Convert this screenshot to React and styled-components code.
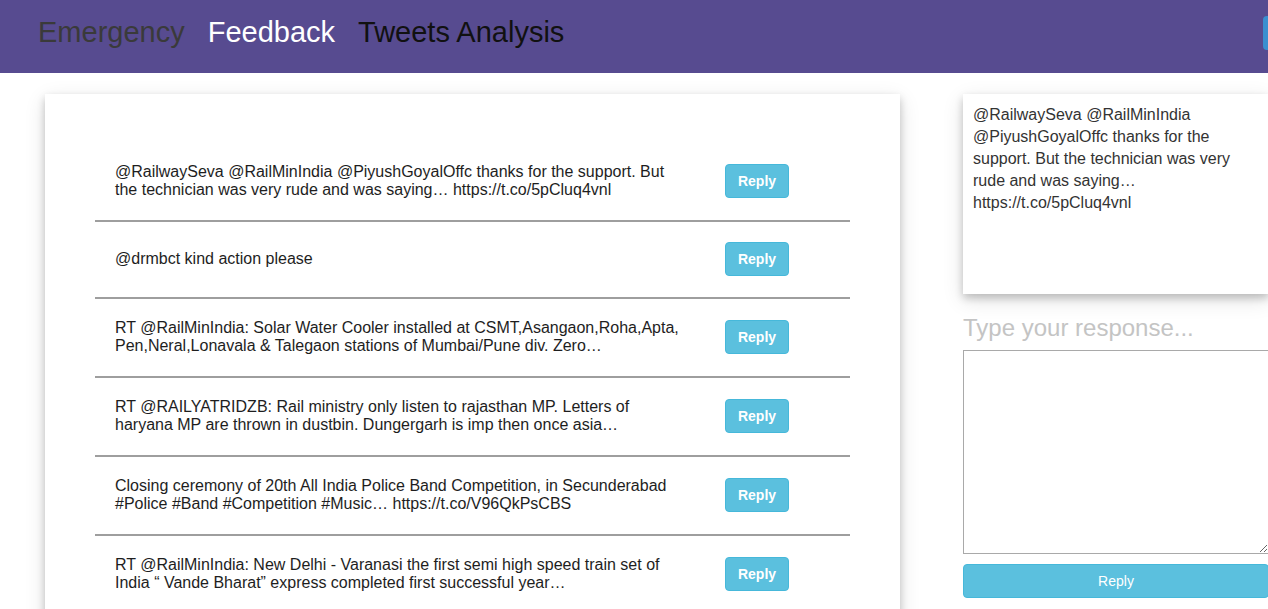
import styled, { createGlobalStyle } from "styled-components";

const GlobalStyle = createGlobalStyle`
  html, body {
    margin: 0;
    padding: 0;
    overflow-x: hidden;
    background: #fff;
    font-family: "Liberation Sans", Arial, sans-serif;
  }
  * {
    box-sizing: border-box;
  }
`;

const NavBar = styled.nav`
  display: flex;
  align-items: center;
  height: 73px;
  padding: 0 0 9px 38px;
  background: #574b90;
  gap: 23px;
`;

const NavLink = styled.a`
  font-size: 29px;
  line-height: 34px;
  color: ${(p) => p.color};
  text-decoration: none;
  white-space: nowrap;
`;

const NavButton = styled.button`
  margin-left: auto;
  margin-right: -75px;
  width: 80px;
  height: 34px;
  margin-top: 2px;
  border: none;
  border-radius: 4px;
  background: #3a8fd0;
  flex-shrink: 0;
`;

const Main = styled.main`
  display: flex;
  align-items: flex-start;
  gap: 63px;
  padding: 21px 0 0 45px;
`;

const ListCard = styled.section`
  width: 855px;
  flex-shrink: 0;
  padding: 49px 50px 0;
  min-height: 600px;
  background: #fff;
  box-shadow: 0 4px 8px 0 rgba(0, 0, 0, 0.2), 0 6px 20px 0 rgba(0, 0, 0, 0.12);
`;

const TweetRow = styled.div`
  display: flex;
  align-items: center;
  padding: 20px 61px 21px 20px;
  border-bottom: 2px solid #9e9e9e;
`;

const TweetText = styled.p`
  width: 570px;
  margin: 0;
  font-size: 16px;
  line-height: 18px;
  color: #1e1e1e;
`;

const SmallReply = styled.button`
  margin-left: auto;
  width: 64px;
  height: 34px;
  padding: 0;
  border: 1px solid #46b8da;
  border-radius: 4px;
  background: #5bc0de;
  color: #fff;
  font-family: "Liberation Sans", Arial, sans-serif;
  font-size: 14px;
  font-weight: bold;
`;

const Side = styled.aside`
  width: 306px;
  flex-shrink: 0;
  display: flex;
  flex-direction: column;
`;

const Selected = styled.div`
  height: 200px;
  padding: 10px 20px 10px 10px;
  background: #fff;
  font-size: 16px;
  line-height: 22px;
  color: #333;
  box-shadow: 0 4px 8px 0 rgba(0, 0, 0, 0.2), 0 6px 20px 0 rgba(0, 0, 0, 0.12);
`;

const Prompt = styled.h3`
  margin: 19px 0 8px;
  font-size: 24px;
  line-height: 29px;
  font-weight: normal;
  color: #c4c4c4;
`;

const Response = styled.textarea`
  display: block;
  width: 100%;
  height: 204px;
  margin: 0 0 10px;
  border: 1px solid #a9a9a9;
  resize: both;
  font-family: "Liberation Sans", Arial, sans-serif;
`;

const WideReply = styled.button`
  width: 100%;
  height: 34px;
  border: 1px solid #46b8da;
  border-radius: 4px;
  background: #5bc0de;
  color: #fff;
  font-family: "Liberation Sans", Arial, sans-serif;
  font-size: 14px;
`;

const tweets = [
  "@RailwaySeva @RailMinIndia @PiyushGoyalOffc thanks for the support. But the technician was very rude and was saying\u2026 https://t.co/5pCluq4vnl",
  "@drmbct kind action please",
  "RT @RailMinIndia: Solar Water Cooler installed at CSMT,Asangaon,Roha,Apta, Pen,Neral,Lonavala & Talegaon stations of Mumbai/Pune div. Zero\u2026",
  "RT @RAILYATRIDZB: Rail ministry only listen to rajasthan MP. Letters of haryana MP are thrown in dustbin. Dungergarh is imp then once asia\u2026",
  "Closing ceremony of 20th All India Police Band Competition, in Secunderabad #Police #Band #Competition #Music\u2026 https://t.co/V96QkPsCBS",
  "RT @RailMinIndia: New Delhi - Varanasi the first semi high speed train set of India \u201c Vande Bharat\u201d express completed first successful year\u2026",
];

export default function App() {
  return (
    <>
      <GlobalStyle />
      <NavBar>
        <NavLink color="#3a3a3a">Emergency</NavLink>
        <NavLink color="#ffffff">Feedback</NavLink>
        <NavLink color="#111111">Tweets Analysis</NavLink>
        <NavButton />
      </NavBar>
      <Main>
        <ListCard>
          {tweets.map((t) => (
            <TweetRow key={t}>
              <TweetText>{t}</TweetText>
              <SmallReply>Reply</SmallReply>
            </TweetRow>
          ))}
        </ListCard>
        <Side>
          <Selected>{tweets[0]}</Selected>
          <Prompt>Type your response...</Prompt>
          <Response />
          <WideReply>Reply</WideReply>
        </Side>
      </Main>
    </>
  );
}
